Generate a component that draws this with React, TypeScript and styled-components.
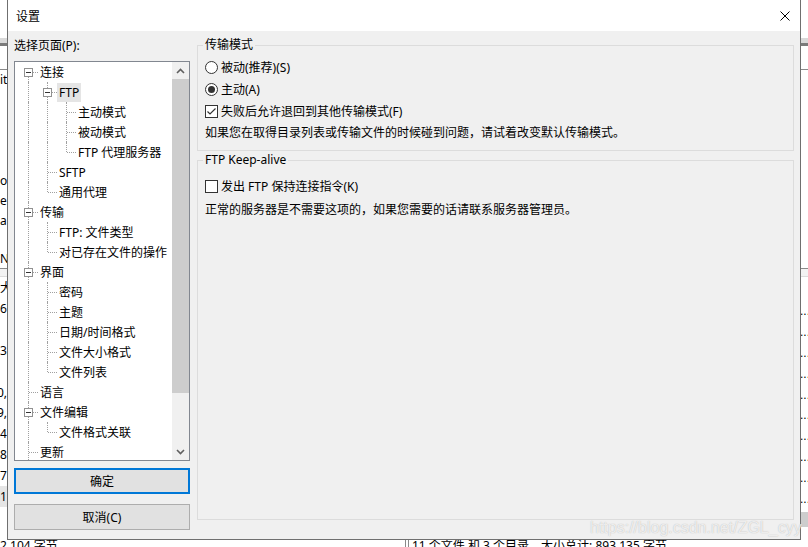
import React from 'react';
import styled, { createGlobalStyle } from 'styled-components';

const GlobalStyle = createGlobalStyle`
  html, body {
    margin: 0;
    padding: 0;
    background: #fff;
  }
  body {
    font-family: "Microsoft YaHei UI", "Noto Sans", "Noto Sans CJK SC", sans-serif;
    font-size: 12px;
    color: #000;
  }
`;

const Desktop = styled.div`
  position: relative;
  width: 808px;
  height: 547px;
  overflow: hidden;
  background: #fff;
`;

/* ---------- the main window behind the dialog ---------- */

const BgApp = styled.div`
  display: flex;
  flex-direction: column;
  width: 808px;
`;

const BgRow = styled.div<{ $h: number; $kind?: 'bar' | 'line' | 'soft' }>`
  display: flex;
  justify-content: space-between;
  align-items: center;
  flex-shrink: 0;
  box-sizing: border-box;
  height: ${(p) => p.$h}px;
  background: ${(p) => (p.$kind === 'bar' ? '#d9d9d9' : p.$kind === 'soft' ? '#f3f3f3' : '#fff')};
  border-bottom: ${(p) =>
    p.$kind === 'bar' ? '3px solid #7a7a7a' : p.$kind === 'line' ? '1px solid #8a8a8a' : p.$kind === 'soft' ? '1px solid #dcdcdc' : 'none'};
`;

const Sliver = styled.div<{ $shade?: string }>`
  width: 7px;
  height: 100%;
  display: flex;
  align-items: center;
  overflow: hidden;
  white-space: nowrap;
  background: ${(p) => p.$shade || 'transparent'};
`;

const SliverText = styled.span<{ $shift?: number }>`
  margin-left: ${(p) => p.$shift || 0}px;
  line-height: 20px;
`;

const Dots = styled.span`
  margin-left: -1px;
  margin-top: 4px;
  font-family: "Liberation Sans", sans-serif;
`;

const StatusBar = styled.div`
  display: flex;
  align-items: center;
  height: 20px;
  flex-shrink: 0;
`;

const StatusCell = styled.div<{ $w?: number }>`
  width: ${(p) => (p.$w ? `${p.$w}px` : 'auto')};
  flex: ${(p) => (p.$w ? '0 0 auto' : '1')};
  border-left: ${(p) => (p.$w ? 'none' : '1px solid #8a8a8a')};
  box-shadow: ${(p) => (p.$w ? 'none' : 'inset 2px 0 0 #fff, inset 3px 0 0 #8a8a8a')};
  padding-left: ${(p) => (p.$w ? 0 : 6)}px;
  white-space: nowrap;
  line-height: 20px;
`;

const Watermark = styled.div`
  position: absolute;
  left: 590px;
  top: 519px;
  font-family: "Liberation Sans", sans-serif;
  font-size: 16px;
  color: rgba(255, 255, 255, 0.75);
  text-shadow: 0 0 1px rgba(120, 120, 120, 0.55);
  white-space: nowrap;
  z-index: 5;
  pointer-events: none;
`;

/* ---------- dialog ---------- */

const Dialog = styled.div`
  position: absolute;
  left: 7px;
  top: -1px;
  width: 794px;
  height: 541px;
  box-sizing: border-box;
  border: 1px solid #6f6f6f;
  background: #f0f0f0;
  display: flex;
  flex-direction: column;
`;

const TitleBar = styled.div`
  flex: 0 0 31px;
  display: flex;
  align-items: center;
  justify-content: space-between;
  padding: 0 10px 0 8px;
  background: #fff;
`;

const DialogBody = styled.div`
  flex: 1;
  display: flex;
  gap: 7px;
  padding: 0 6px;
  min-height: 0;
`;

const LeftColumn = styled.div`
  flex: 0 0 176px;
  display: flex;
  flex-direction: column;
  padding-top: 6px;
`;

const Caption = styled.div`
  line-height: 17px;
  margin-bottom: 7px;
`;

const TreeBox = styled.div`
  display: flex;
  height: 400px;
  box-sizing: border-box;
  border: 1px solid #828790;
  background: #fff;
  overflow: hidden;
`;

const TreeList = styled.div`
  flex: 1;
  display: flex;
  flex-direction: column;
  overflow: hidden;
`;

const TreeRow = styled.div`
  display: flex;
  align-items: center;
  flex-shrink: 0;
  height: 20px;
  white-space: nowrap;
`;

const Guide = styled.span<{ $up?: boolean; $down?: boolean; $branch?: boolean; $box?: boolean }>`
  position: relative;
  flex: 0 0 19px;
  height: 20px;
  &::before {
    content: '';
    position: absolute;
    left: 13px;
    top: ${(p) => (p.$up ? 0 : 10)}px;
    bottom: ${(p) => (p.$down ? 0 : 10)}px;
    border-left: 1px dotted #a0a0a0;
    display: ${(p) => (p.$up || p.$down ? 'block' : 'none')};
  }
  &::after {
    content: '';
    position: absolute;
    left: ${(p) => (p.$box ? 18 : 14)}px;
    top: 10px;
    width: ${(p) => (p.$box ? 5 : 9)}px;
    border-top: 1px dotted #a0a0a0;
    display: ${(p) => (p.$branch ? 'block' : 'none')};
  }
`;

const Expander = styled.span`
  position: absolute;
  left: 9px;
  top: 6px;
  width: 9px;
  height: 9px;
  box-sizing: border-box;
  border: 1px solid #919191;
  background: #fff;
  z-index: 1;
  &::after {
    content: '';
    position: absolute;
    left: 1px;
    top: 3px;
    width: 5px;
    height: 1px;
    background: #333;
  }
`;

const NodeLabel = styled.span<{ $selected?: boolean }>`
  margin-left: 4px;
  padding: 0 2px;
  height: 19px;
  line-height: 19px;
  background: ${(p) => (p.$selected ? '#e5e5e5' : 'transparent')};
`;

const ScrollBar = styled.div`
  flex: 0 0 17px;
  display: flex;
  flex-direction: column;
  background: #f0f0f0;
`;

const ScrollArrow = styled.div`
  flex: 0 0 17px;
  display: flex;
  align-items: center;
  justify-content: center;
`;

const ScrollTrack = styled.div`
  flex: 1;
  display: flex;
  flex-direction: column;
`;

const ScrollThumb = styled.div<{ $size: number }>`
  height: ${(p) => p.$size}px;
  background: #cdcdcd;
`;

const Button = styled.button<{ $default?: boolean }>`
  display: block;
  width: 100%;
  height: 26px;
  box-sizing: border-box;
  margin: ${(p) => (p.$default ? '7px 0 0' : '10px 0 0')};
  padding: 0;
  font: inherit;
  color: #000;
  background: #e1e1e1;
  border: ${(p) => (p.$default ? '2px solid #0078d7' : '1px solid #adadad')};
`;

const RightColumn = styled.div`
  flex: 1;
  display: flex;
  flex-direction: column;
  gap: 1px;
  padding: 6px 0 19px;
  min-width: 0;
`;

const GroupBox = styled.fieldset<{ $grow?: boolean }>`
  margin: 0;
  padding: 0 7px 6px 7px;
  border: 1px solid #dcdcdc;
  min-width: 0;
  flex: ${(p) => (p.$grow ? '1' : '0 0 auto')};
`;

const GroupTitle = styled.legend`
  padding: 0 2px;
  margin-left: -2px;
  line-height: 16px;
`;

const OptionRow = styled.label<{ $gap?: number }>`
  display: flex;
  align-items: center;
  gap: 3px;
  height: 22px;
  margin-top: ${(p) => p.$gap || 0}px;
`;

const Note = styled.div<{ $gap?: number }>`
  height: 22px;
  line-height: 22px;
  margin-top: ${(p) => p.$gap || 0}px;
  white-space: nowrap;
`;

const Radio = styled.span<{ $checked?: boolean }>`
  flex: 0 0 13px;
  height: 13px;
  box-sizing: border-box;
  border: 1px solid #333;
  border-radius: 50%;
  background: #fff;
  display: flex;
  align-items: center;
  justify-content: center;
  &::after {
    content: '';
    width: 7px;
    height: 7px;
    border-radius: 50%;
    background: #333;
    display: ${(p) => (p.$checked ? 'block' : 'none')};
  }
`;

const CheckBox = styled.span`
  flex: 0 0 13px;
  height: 13px;
  box-sizing: border-box;
  border: 1px solid #333;
  background: #fff;
  display: flex;
`;

type TreeNode = { label: string; level: number; open?: boolean; selected?: boolean };

const nodes: TreeNode[] = [
  { label: '连接', level: 0, open: true },
  { label: 'FTP', level: 1, open: true, selected: true },
  { label: '主动模式', level: 2 },
  { label: '被动模式', level: 2 },
  { label: 'FTP 代理服务器', level: 2 },
  { label: 'SFTP', level: 1 },
  { label: '通用代理', level: 1 },
  { label: '传输', level: 0, open: true },
  { label: 'FTP: 文件类型', level: 1 },
  { label: '对已存在文件的操作', level: 1 },
  { label: '界面', level: 0, open: true },
  { label: '密码', level: 1 },
  { label: '主题', level: 1 },
  { label: '日期/时间格式', level: 1 },
  { label: '文件大小格式', level: 1 },
  { label: '文件列表', level: 1 },
  { label: '语言', level: 0 },
  { label: '文件编辑', level: 0, open: true },
  { label: '文件格式关联', level: 1 },
  { label: '更新', level: 0 },
  { label: '日志', level: 0 },
  { label: '调试', level: 0 },
];

// true when a later node sits at `level` before the tree climbs above it
const continues = (i: number, level: number) => {
  for (let j = i + 1; j < nodes.length; j++) {
    if (nodes[j].level < level) return false;
    if (nodes[j].level === level) return true;
  }
  return false;
};

const listRows = ['6', '', '32', '', '0,8', '9,3', '4', '8', '7', '1'];

const Chevron = ({ down }: { down?: boolean }) => (
  <svg width="9" height="6" viewBox="0 0 9 6">
    <polyline
      points={down ? '1,1 4.5,4.5 8,1' : '1,5 4.5,1.5 8,5'}
      fill="none"
      stroke="#606060"
      strokeWidth="1.6"
    />
  </svg>
);

const CloseIcon = () => (
  <svg width="10" height="10" viewBox="0 0 10 10">
    <path d="M0.5 0.5 L9.5 9.5 M9.5 0.5 L0.5 9.5" stroke="#000" strokeWidth="1" />
  </svg>
);

const Tick = () => (
  <svg width="11" height="11" viewBox="0 0 11 11">
    <polyline points="1.5,5.5 4,8 9.5,2.5" fill="none" stroke="#333" strokeWidth="1.2" />
  </svg>
);

const App = () => {
  return (
    <Desktop>
      <GlobalStyle />
      <BgApp>
        <BgRow $h={38} />
        <BgRow $h={8} $kind="bar" />
        <BgRow $h={24} $kind="line" />
        <BgRow $h={20}>
          <Sliver>
            <SliverText>it</SliverText>
          </Sliver>
        </BgRow>
        <BgRow $h={81} />
        <BgRow $h={20}>
          <Sliver>
            <SliverText>or</SliverText>
          </Sliver>
        </BgRow>
        <BgRow $h={20}>
          <Sliver>
            <SliverText>e</SliverText>
          </Sliver>
        </BgRow>
        <BgRow $h={20}>
          <Sliver>
            <SliverText>a</SliverText>
          </Sliver>
        </BgRow>
        <BgRow $h={19} />
        <BgRow $h={19} $kind="line">
          <Sliver>
            <SliverText>N</SliverText>
          </Sliver>
        </BgRow>
        <BgRow $h={8} $kind="soft" />
        <BgRow $h={22}>
          <Sliver>
            <SliverText>大</SliverText>
          </Sliver>
        </BgRow>
        {listRows.map((t, i) => (
          <BgRow key={i} $h={20.8}>
            <Sliver $shade={i === 9 ? '#e5e5e5' : undefined}>
              <SliverText $shift={t.length > 2 ? -3 : 0}>{t}</SliverText>
            </Sliver>
            <Sliver>
              <Dots>...</Dots>
            </Sliver>
          </BgRow>
        ))}
        <BgRow $h={5} />
        <BgRow $h={15}>
          <Sliver />
          <Sliver $shade="#cdcdcd" />
        </BgRow>
        <BgRow $h={9} />
        <StatusBar>
          <StatusCell $w={405}>2,104 字节</StatusCell>
          <StatusCell>11 个文件 和 3 个目录。大小总计: 893,135 字节</StatusCell>
        </StatusBar>
      </BgApp>

      <Dialog>
        <TitleBar>
          <span>设置</span>
          <CloseIcon />
        </TitleBar>
        <DialogBody>
          <LeftColumn>
            <Caption>选择页面(P):</Caption>
            <TreeBox>
              <TreeList>
                {nodes.map((n, i) => {
                  const guides = [];
                  for (let k = 0; k < n.level; k++) {
                    const line = continues(i, k);
                    guides.push(<Guide key={k} $up={line} $down={line} />);
                  }
                  return (
                    <TreeRow key={i}>
                      {guides}
                      <Guide $up={i > 0} $down={continues(i, n.level)} $branch $box={n.open}>
                        {n.open && <Expander />}
                      </Guide>
                      <NodeLabel $selected={n.selected}>{n.label}</NodeLabel>
                    </TreeRow>
                  );
                })}
              </TreeList>
              <ScrollBar>
                <ScrollArrow>
                  <Chevron />
                </ScrollArrow>
                <ScrollTrack>
                  <ScrollThumb $size={314} />
                </ScrollTrack>
                <ScrollArrow>
                  <Chevron down />
                </ScrollArrow>
              </ScrollBar>
            </TreeBox>
            <Button $default>确定</Button>
            <Button>取消(C)</Button>
          </LeftColumn>

          <RightColumn>
            <GroupBox>
              <GroupTitle>传输模式</GroupTitle>
              <OptionRow $gap={3}>
                <Radio />
                被动(推荐)(S)
              </OptionRow>
              <OptionRow>
                <Radio $checked />
                主动(A)
              </OptionRow>
              <OptionRow>
                <CheckBox>
                  <Tick />
                </CheckBox>
                失败后允许退回到其他传输模式(F)
              </OptionRow>
              <Note>如果您在取得目录列表或传输文件的时候碰到问题，请试着改变默认传输模式。</Note>
            </GroupBox>
            <GroupBox $grow>
              <GroupTitle>FTP Keep-alive</GroupTitle>
              <OptionRow $gap={7}>
                <CheckBox />
                发出 FTP 保持连接指令(K)
              </OptionRow>
              <Note $gap={2}>正常的服务器是不需要这项的，如果您需要的话请联系服务器管理员。</Note>
            </GroupBox>
          </RightColumn>
        </DialogBody>
      </Dialog>

      <Watermark>https://blog.csdn.net/ZGL_cyy</Watermark>
    </Desktop>
  );
};

export default App;
